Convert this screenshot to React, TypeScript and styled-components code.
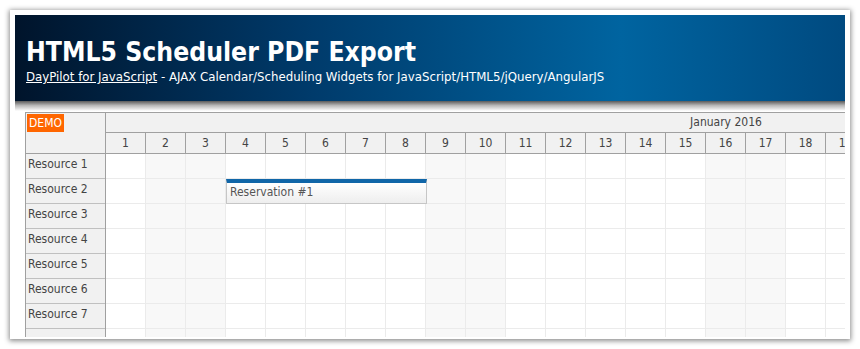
import React from "react";
import styled, { createGlobalStyle } from "styled-components";

const FONT = `"DejaVu Sans Condensed", "Liberation Sans", sans-serif`;

const GlobalStyle = createGlobalStyle`
  body {
    margin: 0;
    background: #ffffff;
    font-family: ${FONT};
  }
`;

const Page = styled.div`
  padding: 10px 10px 0 10px;
  height: 349px;
  box-sizing: border-box;
  overflow: hidden;
`;

const Card = styled.div`
  width: 840px;
  height: 329px;
  box-sizing: border-box;
  padding: 5px;
  background: #ffffff;
  box-shadow: 0 1px 5px 1px rgba(0, 0, 0, 0.45);
  overflow: hidden;
`;

const Header = styled.div`
  height: 86px;
  box-sizing: border-box;
  padding: 21px 0 0 11px;
  background: linear-gradient(
    90deg,
    #00142b 0%,
    #003a6a 35%,
    #0064a0 73%,
    #004a80 100%
  );
  color: #ffffff;
`;

const Title = styled.h1`
  margin: 0;
  font-family: ${FONT};
  font-size: 26.3px;
  font-weight: bold;
  line-height: 33px;
`;

const Subtitle = styled.div`
  font-size: 13.1px;
  line-height: 16px;
  a {
    color: #ffffff;
    text-decoration: underline;
  }
`;

const HeaderShadow = styled.div`
  height: 10px;
  background: linear-gradient(180deg, #5a5a5a 0%, #b8b8b8 45%, #ffffff 100%);
  margin-bottom: 1px;
`;

const Scheduler = styled.div`
  display: flex;
  margin-left: 10px;
  width: 820px;
  height: 225px;
  overflow: hidden;
  font-size: 12px;
  color: #444;
`;

const RowHeaders = styled.div`
  flex: none;
  width: 81px;
  box-sizing: border-box;
  border-left: 1px solid #a0a0a0;
  border-right: 1px solid #a0a0a0;
  border-top: 1px solid #a0a0a0;
  background: #f1f1f1;
`;

const Corner = styled.div`
  height: 41px;
  border-bottom: 1px solid #a0a0a0;
  padding: 1px 0 0 1px;
  box-sizing: border-box;
`;

const Demo = styled.span`
  display: inline-block;
  background: #ff6600;
  color: #ffffff;
  font-size: 12px;
  line-height: 18px;
  padding: 0 2px;
`;

const ResourceCell = styled.div`
  height: 25px;
  box-sizing: border-box;
  border-bottom: 1px solid #c0c0c0;
  padding: 0 0 0 2px;
  line-height: 21px;
`;

const Timeline = styled.div`
  flex: 1;
  overflow: hidden;
  position: relative;
`;

const TimeHeader = styled.div`
  width: 1240px;
  background: #f1f1f1;
  border-top: 1px solid #a0a0a0;
  border-bottom: 1px solid #a0a0a0;
`;

const MonthRow = styled.div`
  height: 19px;
  line-height: 18px;
  text-align: center;
  border-bottom: 1px solid #a0a0a0;
`;

const DayRow = styled.div`
  display: flex;
  height: 20px;
`;

const DayCell = styled.div`
  flex: none;
  width: 40px;
  box-sizing: border-box;
  border-right: 1px solid #a0a0a0;
  text-align: center;
  line-height: 20px;
`;

const Body = styled.div`
  width: 1240px;
`;

const Row = styled.div`
  display: flex;
  height: 25px;
`;

const Cell = styled.div<{ $weekend: boolean }>`
  flex: none;
  width: 40px;
  box-sizing: border-box;
  border-right: 1px solid #ebebeb;
  border-bottom: 1px solid #ebebeb;
  background: ${(p) => (p.$weekend ? "#f8f8f8" : "#ffffff")};
`;

const Event = styled.div`
  position: absolute;
  box-sizing: border-box;
  height: 25px;
  border: 1px solid #c6c6c6;
  border-top: 4px solid #1066a8;
  background: linear-gradient(180deg, #ffffff 0%, #eeeeee 100%);
  color: #555;
  font-size: 12px;
  line-height: 19px;
  padding-left: 3px;
`;

const days = Array.from({ length: 31 }, (_, i) => i + 1);
const isWeekend = (d: number) => (d + 4) % 7 === 6 || (d + 4) % 7 === 0;
const resources = Array.from({ length: 8 }, (_, i) => `Resource ${i + 1}`);

const App = () => {
  return (
    <Page>
      <GlobalStyle />
      <Card>
        <Header>
          <Title>HTML5 Scheduler PDF Export</Title>
          <Subtitle>
            <a href="#">DayPilot for JavaScript</a> - AJAX Calendar/Scheduling
            Widgets for JavaScript/HTML5/jQuery/AngularJS
          </Subtitle>
        </Header>
        <HeaderShadow />
        <Scheduler>
          <RowHeaders>
            <Corner>
              <Demo>DEMO</Demo>
            </Corner>
            {resources.map((r) => (
              <ResourceCell key={r}>{r === "Resource 8" ? "" : r}</ResourceCell>
            ))}
          </RowHeaders>
          <Timeline>
            <TimeHeader>
              <MonthRow>January 2016</MonthRow>
              <DayRow>
                {days.map((d) => (
                  <DayCell key={d}>{d}</DayCell>
                ))}
              </DayRow>
            </TimeHeader>
            <Body>
              {resources.map((r) => (
                <Row key={r}>
                  {days.map((d) => (
                    <Cell key={d} $weekend={isWeekend(d)} />
                  ))}
                </Row>
              ))}
            </Body>
            <Event style={{ left: 120, top: 67, width: 201 }}>
              Reservation #1
            </Event>
          </Timeline>
        </Scheduler>
      </Card>
    </Page>
  );
};

export default App;
